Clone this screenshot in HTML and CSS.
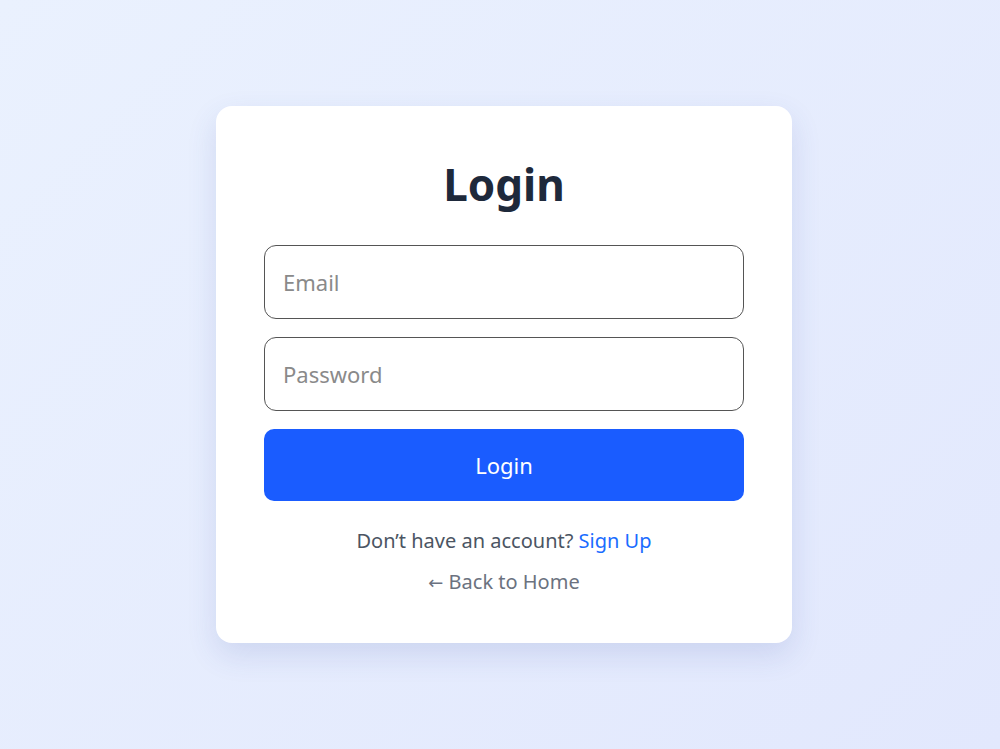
FILE: index.html
```html
<!DOCTYPE html>
<html lang="en">
<head>
    <meta charset="UTF-8">
    <meta name="viewport" content="width=device-width, initial-scale=1.0">
    <title>Login</title>
    <link rel="stylesheet" href="styles.css">
</head>
<body>

    <!-- Login Card -->
    <div class="login-card">
        <h1>Login</h1>

        <form class="login-form">
            <input type="email" placeholder="Email">
            <input type="password" placeholder="Password">
            <button type="submit">Login</button>
        </form>

        <p class="signup-text">Don’t have an account? <a href="#">Sign Up</a></p>
        <a class="back-link" href="#"><span class="arrow">←</span> Back to Home</a>
    </div>

</body>
</html>
```

FILE: styles.css
```css
/* Basic Styles */
html, body {
    height: 100%;
    margin: 0;
}

body {
    font-family: "Segoe UI", "Noto Sans", "Open Sans", sans-serif;
    background: linear-gradient(135deg, #eaf1fe 0%, #e2e8fd 100%);
    display: flex;
    align-items: center;
    justify-content: center;
    padding-left: 8px;
    box-sizing: border-box;
}

/* Card */
.login-card {
    width: 576px;
    box-sizing: border-box;
    background-color: #ffffff;
    border-radius: 16px;
    padding: 50px 48px 48px;
    box-shadow: 0 12px 30px rgba(60, 80, 160, 0.14);
    text-align: center;
}

h1 {
    font-size: 44px;
    font-weight: bold;
    color: #1e293b;
    margin: 0 0 32px;
    line-height: 1.3;
}

/* Form */
.login-form {
    display: flex;
    flex-direction: column;
    gap: 18px;
}

.login-form input {
    height: 74px;
    box-sizing: border-box;
    padding: 0 18px;
    border: 1px solid #555;
    border-radius: 12px;
    font-family: inherit;
    font-size: 22px;
    color: #333;
    outline: none;
}

.login-form input::placeholder {
    color: #8a8a8a;
}

.login-form button {
    height: 72px;
    border: none;
    border-radius: 10px;
    background-color: #1a5cff;
    color: #ffffff;
    font-family: inherit;
    font-size: 22px;
    cursor: pointer;
}

.login-form button:hover {
    background-color: #0f4fe6;
}

/* Footer links */
.signup-text {
    margin: 26px 0 14px;
    font-size: 20px;
    color: #4b5563;
}

.signup-text a {
    color: #1a6cff;
    text-decoration: none;
}

.back-link {
    display: inline-block;
    font-size: 20px;
    color: #6b7280;
    text-decoration: none;
}

.back-link .arrow {
    font-family: "DejaVu Sans", sans-serif;
    font-size: 18px;
}
```
